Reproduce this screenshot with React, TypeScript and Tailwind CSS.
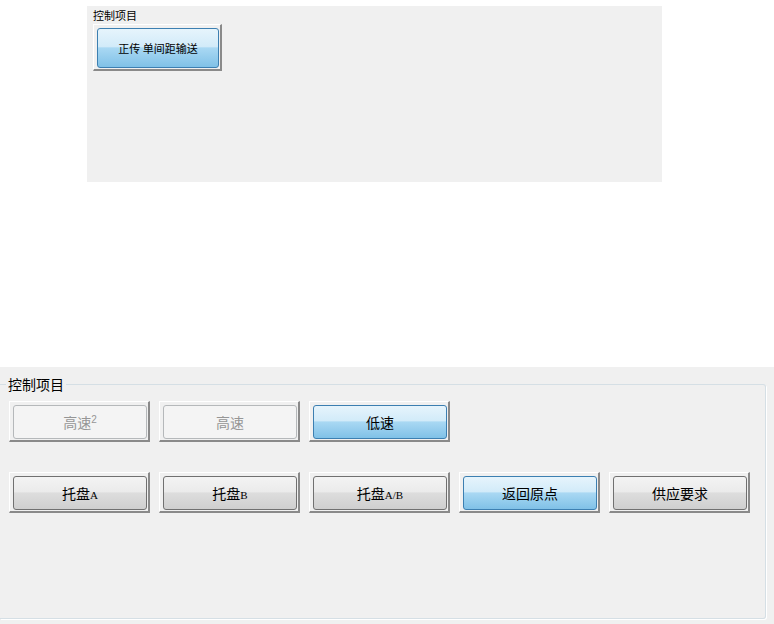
import React from "react";

type Variant = "blue" | "gray" | "disabled";

const innerByVariant: Record<Variant, string> = {
  blue: "border-[#3c7fb1] bg-[linear-gradient(to_bottom,#e6f4fc_0%,#d2ebf9_46%,#a9d8f3_50%,#80c1e7_100%)] text-black",
  gray: "border-[#707070] bg-[linear-gradient(to_bottom,#f3f3f3_0%,#ebebeb_46%,#dddddd_50%,#cfcfcf_100%)] text-black",
  disabled: "border-[#b5b8ba] bg-[#f4f4f4] text-[#969696]",
};

function Btn({
  variant,
  size,
  children,
}: {
  variant: Variant;
  size: "big" | "small";
  children: React.ReactNode;
}) {
  const outer =
    size === "big"
      ? "w-[141px] h-[41px] text-[14px]"
      : "w-[129px] h-[47px] text-[11px]";
  return (
    <div
      className={`${outer} shrink-0 flex border-t border-l border-white border-r-2 border-b-2 border-r-[#8a8a8a] border-b-[#8a8a8a] pt-[3px] pl-[3px] pr-[1px] pb-[1px]`}
    >
      <div
        className={`flex-1 flex items-center justify-center rounded-[3px] border ${innerByVariant[variant]}`}
      >
        <span className="leading-none">{children}</span>
      </div>
    </div>
  );
}

const Lat = ({ children }: { children: React.ReactNode }) => (
  <span className="font-['Liberation_Serif',serif] text-[11px]">{children}</span>
);

export default function App() {
  return (
    <div className="w-[774px] h-[624px] bg-white flex flex-col font-['Noto_Sans_CJK_SC',sans-serif] text-black overflow-hidden">
      <div className="ml-[87px] mt-[6px] w-[575px] h-[176px] shrink-0 bg-[#f0f0f0] flex flex-col pl-[6px]">
        <div className="text-[11px] leading-[18px]">控制项目</div>
        <div className="flex">
          <Btn variant="blue" size="small">
            正传 单间距输送
          </Btn>
        </div>
      </div>

      <div className="mt-[185px] flex-1 bg-[#f0f0f0] pt-[17px]">
        <div className="relative h-[235px] w-[766px] border-t border-r border-b border-[#d5dfe5] rounded-r-[3px] shadow-[1px_1px_0_#ffffff] pt-[16px] pl-[9px] flex flex-col gap-[30px]">
          <span className="absolute -top-[9px] left-[6px] px-[2px] bg-[#f0f0f0] text-[14px] leading-[16px]">
            控制项目
          </span>
          <div className="flex gap-[9px]">
            <Btn variant="disabled" size="big">
              高速<span className="font-['Liberation_Sans',sans-serif] text-[10px] align-top">2</span>
            </Btn>
            <Btn variant="disabled" size="big">
              高速
            </Btn>
            <Btn variant="blue" size="big">
              低速
            </Btn>
          </div>
          <div className="flex gap-[9px]">
            <Btn variant="gray" size="big">
              托盘<Lat>A</Lat>
            </Btn>
            <Btn variant="gray" size="big">
              托盘<Lat>B</Lat>
            </Btn>
            <Btn variant="gray" size="big">
              托盘<Lat>A/B</Lat>
            </Btn>
            <Btn variant="blue" size="big">
              返回原点
            </Btn>
            <Btn variant="gray" size="big">
              供应要求
            </Btn>
          </div>
        </div>
      </div>
    </div>
  );
}
